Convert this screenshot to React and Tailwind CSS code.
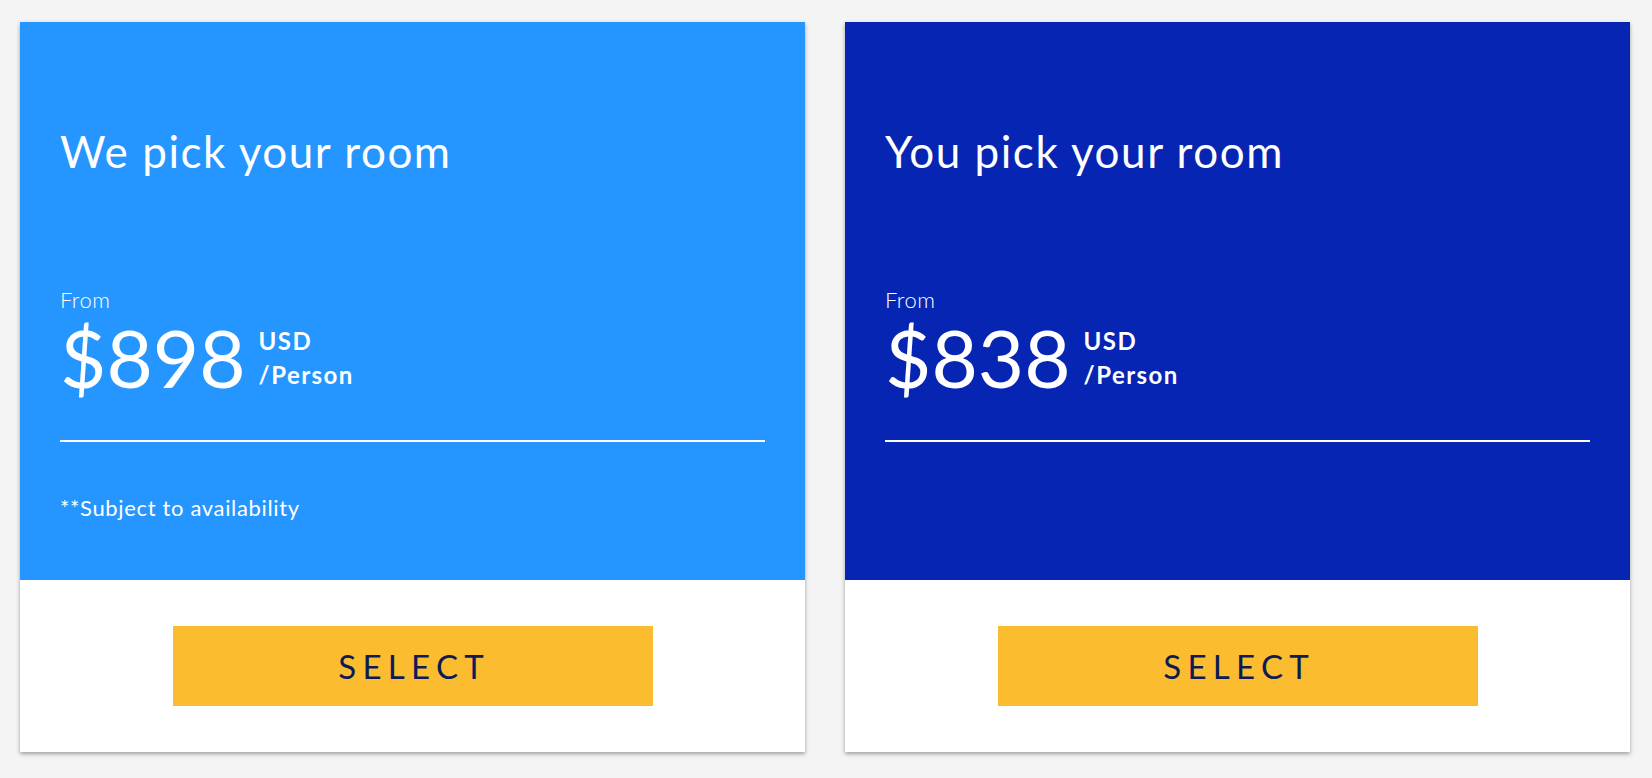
export default function App() {
  const cards = [
    { title: "We pick your room", price: "$898", bg: "bg-[#2595ff]", note: "**Subject to availability" },
    { title: "You pick your room", price: "$838", bg: "bg-[#0625b2]", note: "" },
  ];
  return (
    <div className="min-h-[778px] bg-[#f4f4f4] flex gap-[40px] pl-[20px] pt-[22px] pb-[26px]" style={{ fontFamily: "Lato, 'Open Sans', sans-serif" }}>
      {cards.map((c, i) => (
        <div key={i} className="w-[785px] h-[730px] bg-white shadow-[0_2px_4px_rgba(0,0,0,0.35)] flex flex-col">
          <div className={`${c.bg} h-[558px] px-[40px] pt-[107px] text-white flex flex-col`}>
            <div className="text-[44px] leading-none font-normal tracking-[0.035em]">{c.title}</div>
            <div className="mt-[116px] text-[22px] leading-none font-light tracking-[0.02em]">From</div>
            <div className="mt-[6px] flex items-start">
              <div className="text-[80px] leading-none font-normal">{c.price}</div>
              <div className="ml-[13px] mt-[7px] flex flex-col text-[24px] leading-[34px] font-bold tracking-[0.06em]">
                <span>USD</span>
                <span>/Person</span>
              </div>
            </div>
            <div className="mt-[43px] h-[2px] bg-white"></div>
            <div className="mt-[55px] text-[22px] leading-none font-normal tracking-[0.03em]">{c.note}</div>
          </div>
          <div className="flex-1 flex justify-center pt-[46px]">
            <button className="w-[480px] h-[80px] bg-[#fbbc30] text-[#0c1b55] text-[33px] tracking-[0.19em] font-normal leading-none pl-[0.1em]">
              SELECT
            </button>
          </div>
        </div>
      ))}
    </div>
  );
}
